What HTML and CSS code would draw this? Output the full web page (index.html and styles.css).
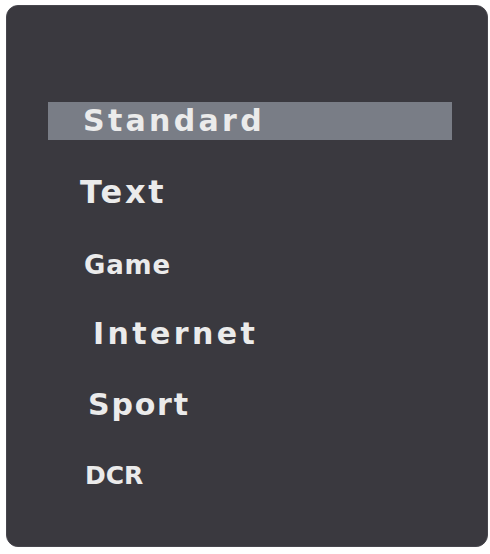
FILE: index.html
```html
<!DOCTYPE html>
<html lang="en">
<head>
  <meta charset="UTF-8">
  <meta name="viewport" content="width=device-width, initial-scale=1.0">
  <title>Picture Mode</title>
  <link rel="stylesheet" href="styles.css">
</head>
<body>

<div class="osd-panel">
  <ul class="mode-list">
    <li class="mode selected standard">Standard</li>
    <li class="mode text">Text</li>
    <li class="mode game">Game</li>
    <li class="mode internet">Internet</li>
    <li class="mode sport">Sport</li>
    <li class="mode dcr">DCR</li>
  </ul>
</div>

</body>
</html>
```

FILE: styles.css
```css
body {
  margin: 0;
  background-color: #ffffff;
  font-family: "DejaVu Sans", Verdana, sans-serif;
}
.osd-panel {
  box-sizing: border-box;
  width: 482px;
  height: 542px;
  margin: 5px 0 0 6px;
  padding: 96px 35px 0 41px;
  background-color: #3a393f;
  border: 1px solid #47464d;
  border-radius: 12px;
}
.mode-list {
  list-style: none;
  margin: 0;
  padding: 0;
}
.mode {
  height: 38px;
  line-height: 38px;
  margin-bottom: 33px;
  padding-left: 35px;
  color: #ebebeb;
  font-size: 30px;
  font-weight: bold;
  white-space: nowrap;
}
.mode.selected {
  background-color: #797d86;
}
.standard {
  letter-spacing: 3.3px;
}
.text {
  font-size: 32px;
  letter-spacing: 2.8px;
  padding-left: 32px;
}
.game {
  font-size: 26px;
  letter-spacing: 0.8px;
  padding-left: 36px;
  line-height: 42px;
}
.internet {
  letter-spacing: 3.4px;
  padding-left: 45px;
}
.sport {
  letter-spacing: 1.8px;
  padding-left: 40px;
}
.dcr {
  font-size: 25px;
  letter-spacing: 0;
  padding-left: 37px;
}
```
